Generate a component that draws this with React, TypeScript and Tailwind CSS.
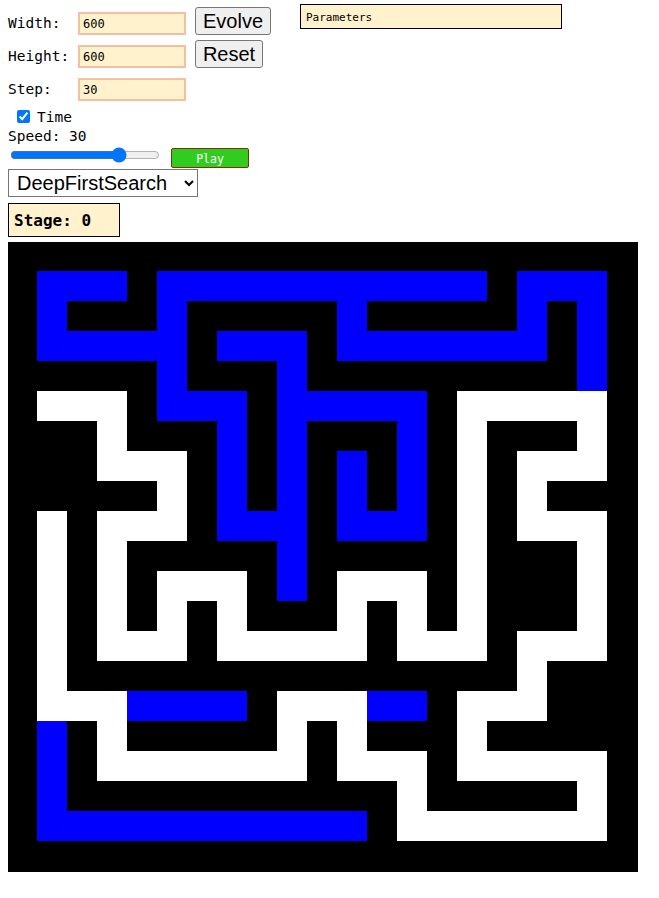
const MAZE = [
  "#####################",
  "#bbb#bbbbbbbbbbb#bbb#",
  "#b###b#####b#####b#b#",
  "#bbbbb#bbb#bbbbbbb#b#",
  "#####b###b#########b#",
  "#www#bbb#bbbbb#wwwww#",
  "###w###b#b###b#w###w#",
  "###www#b#b#b#b#w#www#",
  "#####w#b#b#b#b#w#w###",
  "#w#www#bbb#bbb#w#www#",
  "#w#w#####b#####w###w#",
  "#w#w#www#b#www#w###w#",
  "#w#w#w#w###w#w#w###w#",
  "#w#www#wwwww#www#www#",
  "#w###############w###",
  "#wwwbbbb#wwwbb#www###",
  "#b#w#####w#w###w#####",
  "#b#wwwwwww#www#wwwww#",
  "#b###########w#####w#",
  "#bbbbbbbbbbb#wwwwwww#",
  "#####################",
];

const mono = "font-['DejaVu_Sans_Mono','Liberation_Mono',monospace]";
const sans = "font-['Liberation_Sans',Arial,sans-serif]";

function Field({ label, value }: { label: string; value: string }) {
  return (
    <div className="flex items-center h-[23px]">
      <span className={`${mono} text-[14.5px] w-[70px] text-black`}>{label}</span>
      <input
        defaultValue={value}
        className={`${mono} text-[12px] w-[108px] h-[23px] pl-[3px] border-2 border-[#f5bfa5] bg-[#fff2cc] text-black outline-none`}
      />
    </div>
  );
}

function Maze() {
  const cells: { x: number; y: number; c: string }[] = [];
  MAZE.forEach((row, r) => {
    row.split("").forEach((ch, c) => {
      if (ch !== "#") cells.push({ x: c * 30 - 1, y: r * 30 - 1, c: ch === "b" ? "#0000ff" : "#ffffff" });
    });
  });
  return (
    <svg width="630" height="630" viewBox="0 0 630 630" shapeRendering="crispEdges" className="block">
      <rect x="0" y="0" width="630" height="630" fill="#000000" />
      {cells.map((cell, i) => (
        <rect key={i} x={cell.x} y={cell.y} width="30" height="30" fill={cell.c} />
      ))}
    </svg>
  );
}

export default function App() {
  return (
    <div className="w-[659px] h-[898px] bg-white pl-2 text-black">
      <div className="flex items-start">
        <div className="flex flex-col gap-[10px] mt-[12px]">
          <Field label="Width:" value="600" />
          <Field label="Height:" value="600" />
          <Field label="Step:" value="30" />
        </div>
        <div className="flex flex-col items-start gap-[5px] mt-[7px] ml-[9px]">
          <button className={`${sans} text-[20px] h-[28px] w-[76px] bg-[#efefef] border border-[#767676] rounded-[3px] leading-none`}>
            Evolve
          </button>
          <button className={`${sans} text-[20px] h-[28px] w-[68px] bg-[#efefef] border border-[#767676] rounded-[3px] leading-none`}>
            Reset
          </button>
        </div>
        <div className={`${mono} text-[11px] mt-[4px] ml-[29px] w-[262px] h-[25px] pl-[5px] pt-[3px] flex items-center border border-black bg-[#fff2cc]`}>
          Parameters
        </div>
      </div>

      <label className={`${mono} text-[14.5px] flex items-center h-[17px] mt-[7px] ml-[9px] gap-[7px]`}>
        <input type="checkbox" defaultChecked className="w-[13px] h-[13px] m-0 accent-[#0075ff]" />
        <span className="pt-[2px]">Time</span>
      </label>

      <div className={`${mono} text-[14.5px] h-[18px] leading-[18px] mt-[2px]`}>Speed: 30</div>

      <div className="flex items-start mt-[2px]">
        <input type="range" min={0} max={40} defaultValue={30} className="w-[150px] h-[16px] ml-[2px] m-0" />
        <button className={`${mono} text-[11.5px] text-white w-[78px] h-[20px] mt-[1px] ml-[11px] pt-[3px] bg-[#30cd1f] border border-[#8b2a14] rounded-[2px] leading-none`}>
          Play
        </button>
      </div>

      <select
        defaultValue="dfs"
        className={`${sans} text-[20px] mt-[1px] w-[190px] h-[28px] pl-[4px] border border-[#767676] bg-white text-black block`}
      >
        <option value="dfs">DeepFirstSearch</option>
        <option value="bfs">BreadthFirstSearch</option>
      </select>

      <div className={`${mono} font-bold text-[16px] mt-[6px] w-[112px] h-[34px] pl-[5px] pt-[1px] flex items-center border border-black bg-[#fff2cc]`}>
        Stage: 0
      </div>

      <div className="mt-[5px]">
        <Maze />
      </div>
    </div>
  );
}
